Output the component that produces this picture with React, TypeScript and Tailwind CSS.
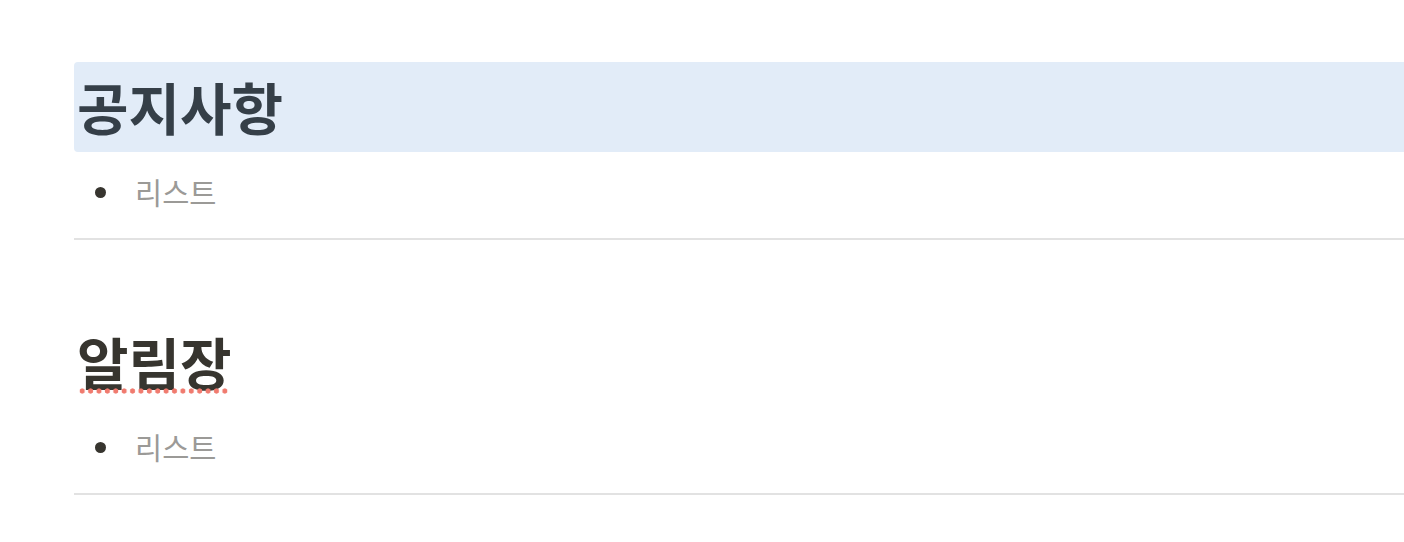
import React from 'react'

const sections = [
  { title: '공지사항', highlighted: true, misspelled: false },
  { title: '알림장', highlighted: false, misspelled: true },
]

export default function App() {
  return (
    <div className="min-h-[542px] w-[1404px] overflow-hidden bg-white pt-[62px] pl-[74px] font-['Noto_Sans_CJK_KR',sans-serif]">
      {sections.map((s, i) => (
        <section key={s.title} className={i > 0 ? 'mt-[77px]' : ''}>
          <div
            className={`flex h-[90px] w-[1400px] items-center rounded-l-[4px] pb-[2px] pl-[3px] ${
              s.highlighted ? 'bg-[#e2ecf8] text-[#353f48]' : 'text-[#37352f]'
            }`}
          >
            <h1 className="relative text-[56px] leading-none font-bold">
              {s.title}
              {s.misspelled && (
                <span className="absolute top-[55px] right-[2px] left-[1px] h-[6px] bg-[radial-gradient(circle,#f07b6f_2.3px,transparent_2.9px)] bg-[length:8.4px_6px] bg-repeat-x" />
              )}
            </h1>
          </div>
          <ul className="flex h-[80px] items-center">
            <li className="flex items-center">
              <span className="ml-[21px] h-[11px] w-[11px] rounded-full bg-[#37352f]" />
              <span className="ml-[29px] text-[29.5px] leading-none text-[#9b9a97]">리스트</span>
            </li>
          </ul>
          <div className="mt-[6px] h-[2px] w-[1400px] bg-[#e2e2e2]" />
        </section>
      ))}
    </div>
  )
}
